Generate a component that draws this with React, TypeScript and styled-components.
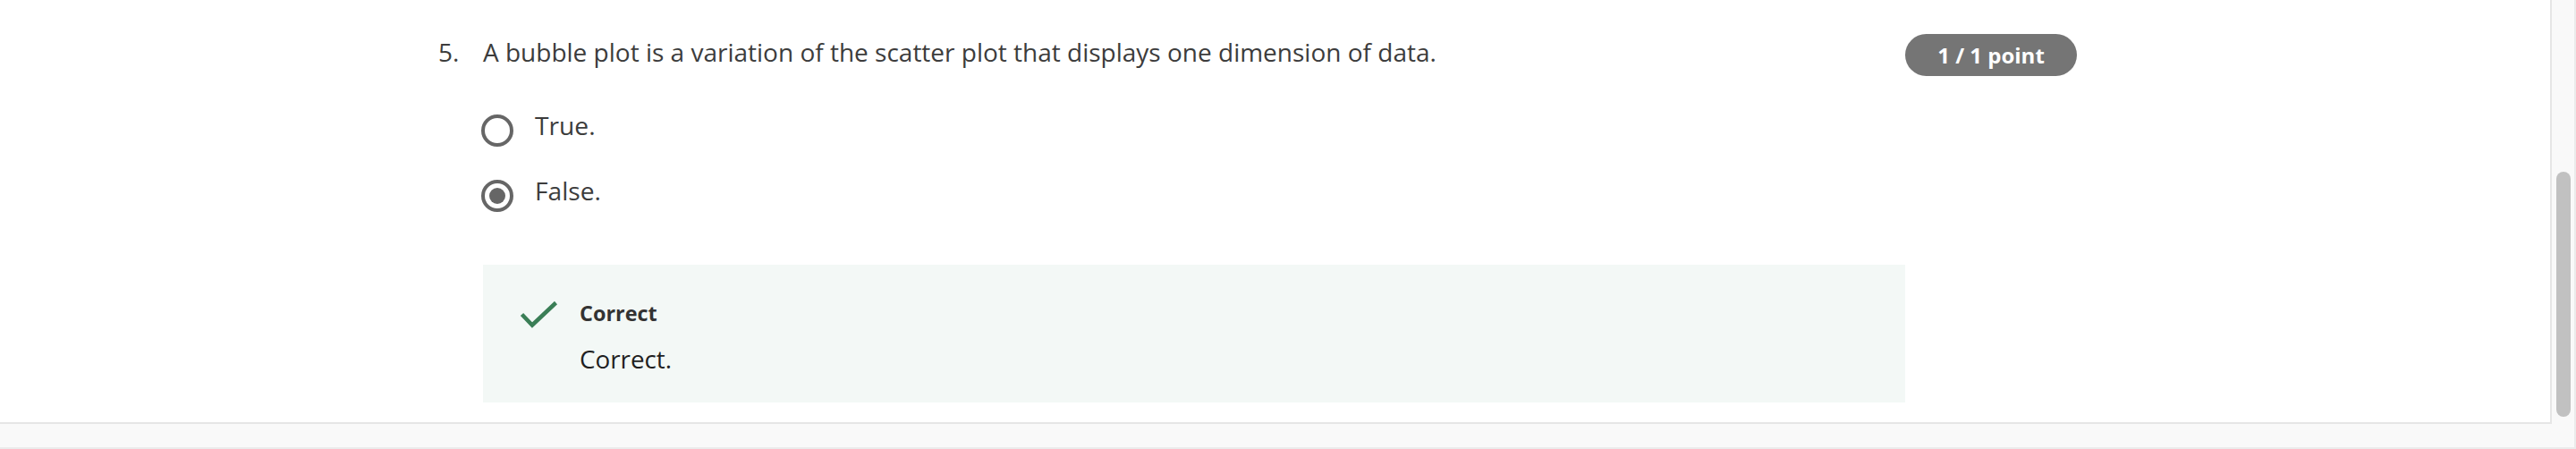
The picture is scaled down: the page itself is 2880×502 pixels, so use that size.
import React from "react";
import styled, { createGlobalStyle } from "styled-components";

const GlobalStyle = createGlobalStyle`
  html, body {
    margin: 0;
    padding: 0;
    background: #f9f9f9;
  }
  body {
    font-family: "Open Sans", "Noto Sans", Arial, sans-serif;
    -webkit-font-smoothing: antialiased;
  }
`;

const Page = styled.div`
  box-sizing: border-box;
  width: 2880px;
  height: 502px;
  background: #f9f9f9;
  border-right: 2px solid #ebebeb;
  border-bottom: 2px solid #ebebeb;
  display: grid;
  grid-template-columns: 2853px 1fr;
  grid-template-rows: 474px 1fr;
  overflow: hidden;
`;

const Panel = styled.main`
  box-sizing: border-box;
  background: #ffffff;
  border-right: 2px solid #e6e6e6;
  border-bottom: 2px solid #e6e6e6;
  padding: 37px 0 0 490px;
  overflow: hidden;
`;

const ScrollTrack = styled.div`
  box-sizing: border-box;
  padding: 192px 0 0 5px;
`;

const ScrollThumb = styled.div`
  width: 16px;
  height: 274px;
  border-radius: 8px;
  background: #c1c1c1;
`;

const QuestionGrid = styled.section`
  display: grid;
  grid-template-columns: 50px 1590px 192px;
  align-items: start;
  color: #3c3c3c;
`;

const QuestionNumber = styled.div`
  font-size: 28px;
  line-height: 43px;
`;

const QuestionBody = styled.div`
  display: flex;
  flex-direction: column;
`;

const QuestionText = styled.p`
  margin: 0;
  font-size: 28px;
  line-height: 43px;
`;

const Badge = styled.div`
  margin-top: 1px;
  height: 47px;
  border-radius: 24px;
  background: #757575;
  color: #ffffff;
  font-weight: 700;
  font-size: 24px;
  display: flex;
  align-items: center;
  justify-content: center;
  padding-bottom: 1px;
  box-sizing: border-box;
`;

const OptionList = styled.div`
  margin-top: 42px;
  margin-left: -2px;
  display: flex;
  flex-direction: column;
  gap: 31px;
`;

const OptionRow = styled.label`
  display: flex;
  align-items: flex-start;
  gap: 24px;
`;

const Radio = styled.span<{ $checked?: boolean }>`
  box-sizing: border-box;
  margin-top: 6px;
  width: 36px;
  height: 36px;
  border-radius: 50%;
  border: 4px solid #666666;
  display: grid;
  place-items: center;
  &::after {
    content: "";
    display: ${(p) => (p.$checked ? "block" : "none")};
    width: 18px;
    height: 18px;
    border-radius: 50%;
    background: #666666;
  }
`;

const OptionLabel = styled.span`
  font-size: 28.2px;
  line-height: 36px;
`;

const Feedback = styled.div`
  margin-top: 59px;
  background: #f3f8f6;
  padding: 38px 0 29px 40px;
  display: flex;
  align-items: flex-start;
  gap: 22px;
`;

const CheckIcon = styled.svg`
  width: 46px;
  height: 36px;
  flex: none;
`;

const FeedbackText = styled.div`
  display: flex;
  flex-direction: column;
  color: #333333;
`;

const FeedbackTitle = styled.div`
  font-weight: 700;
  font-size: 23.4px;
  line-height: 32px;
`;

const FeedbackBody = styled.div`
  margin-top: 15px;
  font-size: 27.8px;
  line-height: 40px;
  color: #1f1f1f;
`;

export default function App() {
  return (
    <>
      <GlobalStyle />
      <Page>
        <Panel>
          <QuestionGrid>
            <QuestionNumber>5.</QuestionNumber>
            <QuestionBody>
              <QuestionText>
                A bubble plot is a variation of the scatter plot that displays one dimension of data.
              </QuestionText>
              <OptionList>
                <OptionRow>
                  <Radio />
                  <OptionLabel>True.</OptionLabel>
                </OptionRow>
                <OptionRow>
                  <Radio $checked />
                  <OptionLabel>False.</OptionLabel>
                </OptionRow>
              </OptionList>
              <Feedback>
                <CheckIcon viewBox="0 0 46 36" aria-hidden="true">
                  <path
                    d="M3.5 17.5 L15 29.5 L41.5 4.5"
                    fill="none"
                    stroke="#3a7e56"
                    strokeWidth="4.5"
                    strokeLinecap="butt"
                    strokeLinejoin="miter"
                  />
                </CheckIcon>
                <FeedbackText>
                  <FeedbackTitle>Correct</FeedbackTitle>
                  <FeedbackBody>Correct.</FeedbackBody>
                </FeedbackText>
              </Feedback>
            </QuestionBody>
            <Badge>1 / 1 point</Badge>
          </QuestionGrid>
        </Panel>
        <ScrollTrack>
          <ScrollThumb />
        </ScrollTrack>
      </Page>
    </>
  );
}
